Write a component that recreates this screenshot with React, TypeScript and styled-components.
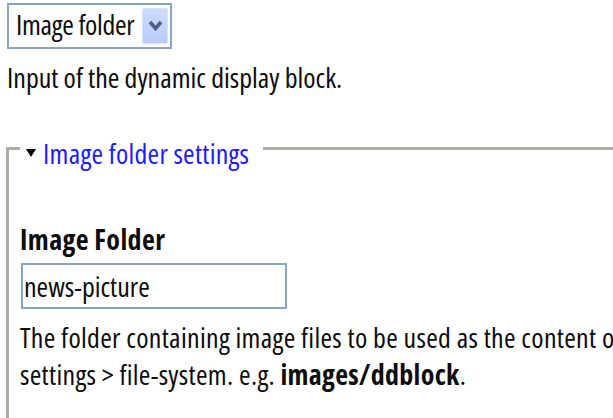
import React from "react";
import styled, { createGlobalStyle } from "styled-components";

const Global = createGlobalStyle`
  html, body {
    margin: 0;
    padding: 0;
    background: #fff;
  }
  body {
    font-family: "Open Sans", "DejaVu Sans Condensed", sans-serif;
    font-stretch: 75%;
    font-size: 28px;
    line-height: 37px;
    color: #0d0d0d;
  }
`;

const Page = styled.div`
  width: 613px;
  height: 418px;
  overflow: hidden;
  padding: 3px 0 0 7px;
  box-sizing: border-box;
`;

const ComboBox = styled.div`
  display: flex;
  align-items: center;
  justify-content: space-between;
  width: 165px;
  height: 46px;
  box-sizing: border-box;
  border: 2px solid #88a4c6;
  padding: 0 2px 0 7px;
  background: #fff;
  cursor: default;
`;

const ComboText = styled.span`
  line-height: 38px;
  padding-bottom: 4px;
  white-space: nowrap;
  letter-spacing: -0.3px;
`;

const ComboButton = styled.span`
  display: flex;
  align-items: center;
  justify-content: center;
  width: 26px;
  height: 36px;
  box-sizing: border-box;
  border: 1px solid #d6e2fd;
  border-radius: 2px;
  background: linear-gradient(180deg, #ccdbfd 0%, #c2d3fb 60%, #b9cbf7 100%);
`;

const Hint = styled.div`
  margin: 10px 0 0;
  white-space: nowrap;
`;

const Fieldset = styled.fieldset`
  margin: 34px 0 0 -1px;
  padding: 54px 0 0 11px;
  width: 1000px;
  min-height: 400px;
  border: 3px solid #acaca4;
  border-right: none;
  border-bottom: none;
  min-inline-size: auto;
`;

const Legend = styled.legend`
  display: flex;
  align-items: center;
  gap: 7px;
  padding: 9px 14px 0 6px;
  line-height: 28px;
  letter-spacing: 0.25px;
  color: #1c1cf7;
  cursor: pointer;
`;

const Field = styled.div`
  display: flex;
  flex-direction: column;
  align-items: flex-start;
`;

const Label = styled.label`
  font-weight: 700;
  letter-spacing: 0.4px;
`;

const TextInput = styled.input`
  margin: 5px 0 0 1px;
  width: 266px;
  height: 46px;
  box-sizing: border-box;
  border: 2px solid #88a4c6;
  padding: 0 0 0 1px;
  font: inherit;
  font-stretch: 75%;
  color: #0d0d0d;
  background: #fff;
  outline: none;
`;

const Help = styled.div`
  margin-top: 10px;
  white-space: nowrap;
  letter-spacing: 0.3px;

  strong {
    font-weight: 700;
  }
`;

function Chevron() {
  return (
    <svg width="15" height="12" viewBox="0 0 15 12" aria-hidden="true">
      <path d="M2 2 L7.5 8.5 L13 2" fill="none" stroke="#4b5f86" strokeWidth="3.6" strokeLinejoin="miter" />
    </svg>
  );
}

function Caret() {
  return (
    <svg width="10" height="8" viewBox="0 0 10 8" aria-hidden="true">
      <path d="M0 0 H10 L5 8 Z" fill="#000" />
    </svg>
  );
}

export default function App() {
  return (
    <>
      <Global />
      <Page>
        <ComboBox>
          <ComboText>Image folder</ComboText>
          <ComboButton>
            <Chevron />
          </ComboButton>
        </ComboBox>
        <Hint>Input of the dynamic display block.</Hint>
        <Fieldset>
          <Legend>
            <Caret />
            Image folder settings
          </Legend>
          <Field>
            <Label htmlFor="image-folder">Image Folder</Label>
            <TextInput id="image-folder" defaultValue="news-picture" />
            <Help>
              The folder containing image files to be used as the content of the dynamic display block.
              The folder is relative to the drupal files path in admin &gt;
              <br />
              settings &gt; file-system. e.g. <strong>images/ddblock</strong>.
            </Help>
          </Field>
        </Fieldset>
      </Page>
    </>
  );
}
